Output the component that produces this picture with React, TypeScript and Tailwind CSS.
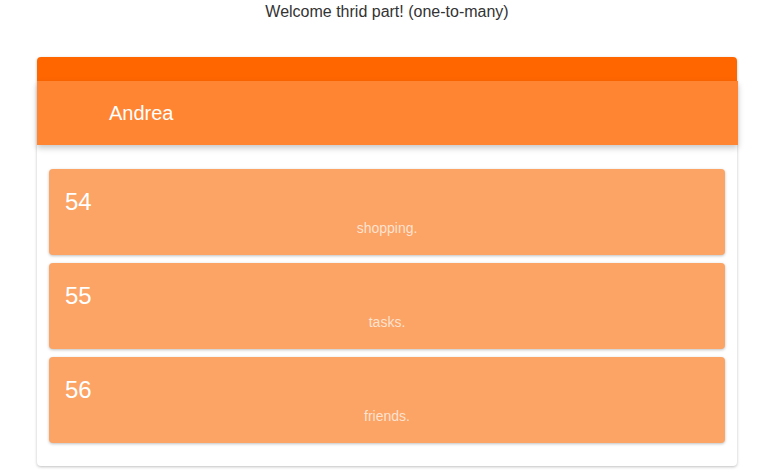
export default function App() {
  const items = [
    { id: 54, label: "shopping." },
    { id: 55, label: "tasks." },
    { id: 56, label: "friends." },
  ];

  return (
    <div className="min-h-screen bg-white" style={{ fontFamily: '"Liberation Sans", Arial, sans-serif' }}>
      <h1 className="text-center text-base leading-6 text-[#333333]">Welcome thrid part! (one-to-many)</h1>

      <div className="mx-auto mt-[33px] w-[700px] rounded bg-white shadow-[0_1px_3px_rgba(0,0,0,0.25)]">
        <div className="h-6 rounded-t bg-[#ff6600]" />
        <div className="relative -mr-px flex h-16 items-center bg-[#ff8533] pl-[72px] text-xl text-white shadow-[0_3px_6px_rgba(0,0,0,0.22)]">
          Andrea
        </div>
        <div className="flex flex-col gap-2 px-3 pb-[23px] pt-6">
          {items.map((item) => (
            <div
              key={item.id}
              className="h-[86px] rounded bg-[#fca465] px-4 pt-4 shadow-[0_1px_3px_rgba(0,0,0,0.25)]"
            >
              <div className="text-2xl leading-[33px] text-white">{item.id}</div>
              <div className="text-center text-sm leading-5 text-white/70">{item.label}</div>
            </div>
          ))}
        </div>
      </div>
    </div>
  );
}
